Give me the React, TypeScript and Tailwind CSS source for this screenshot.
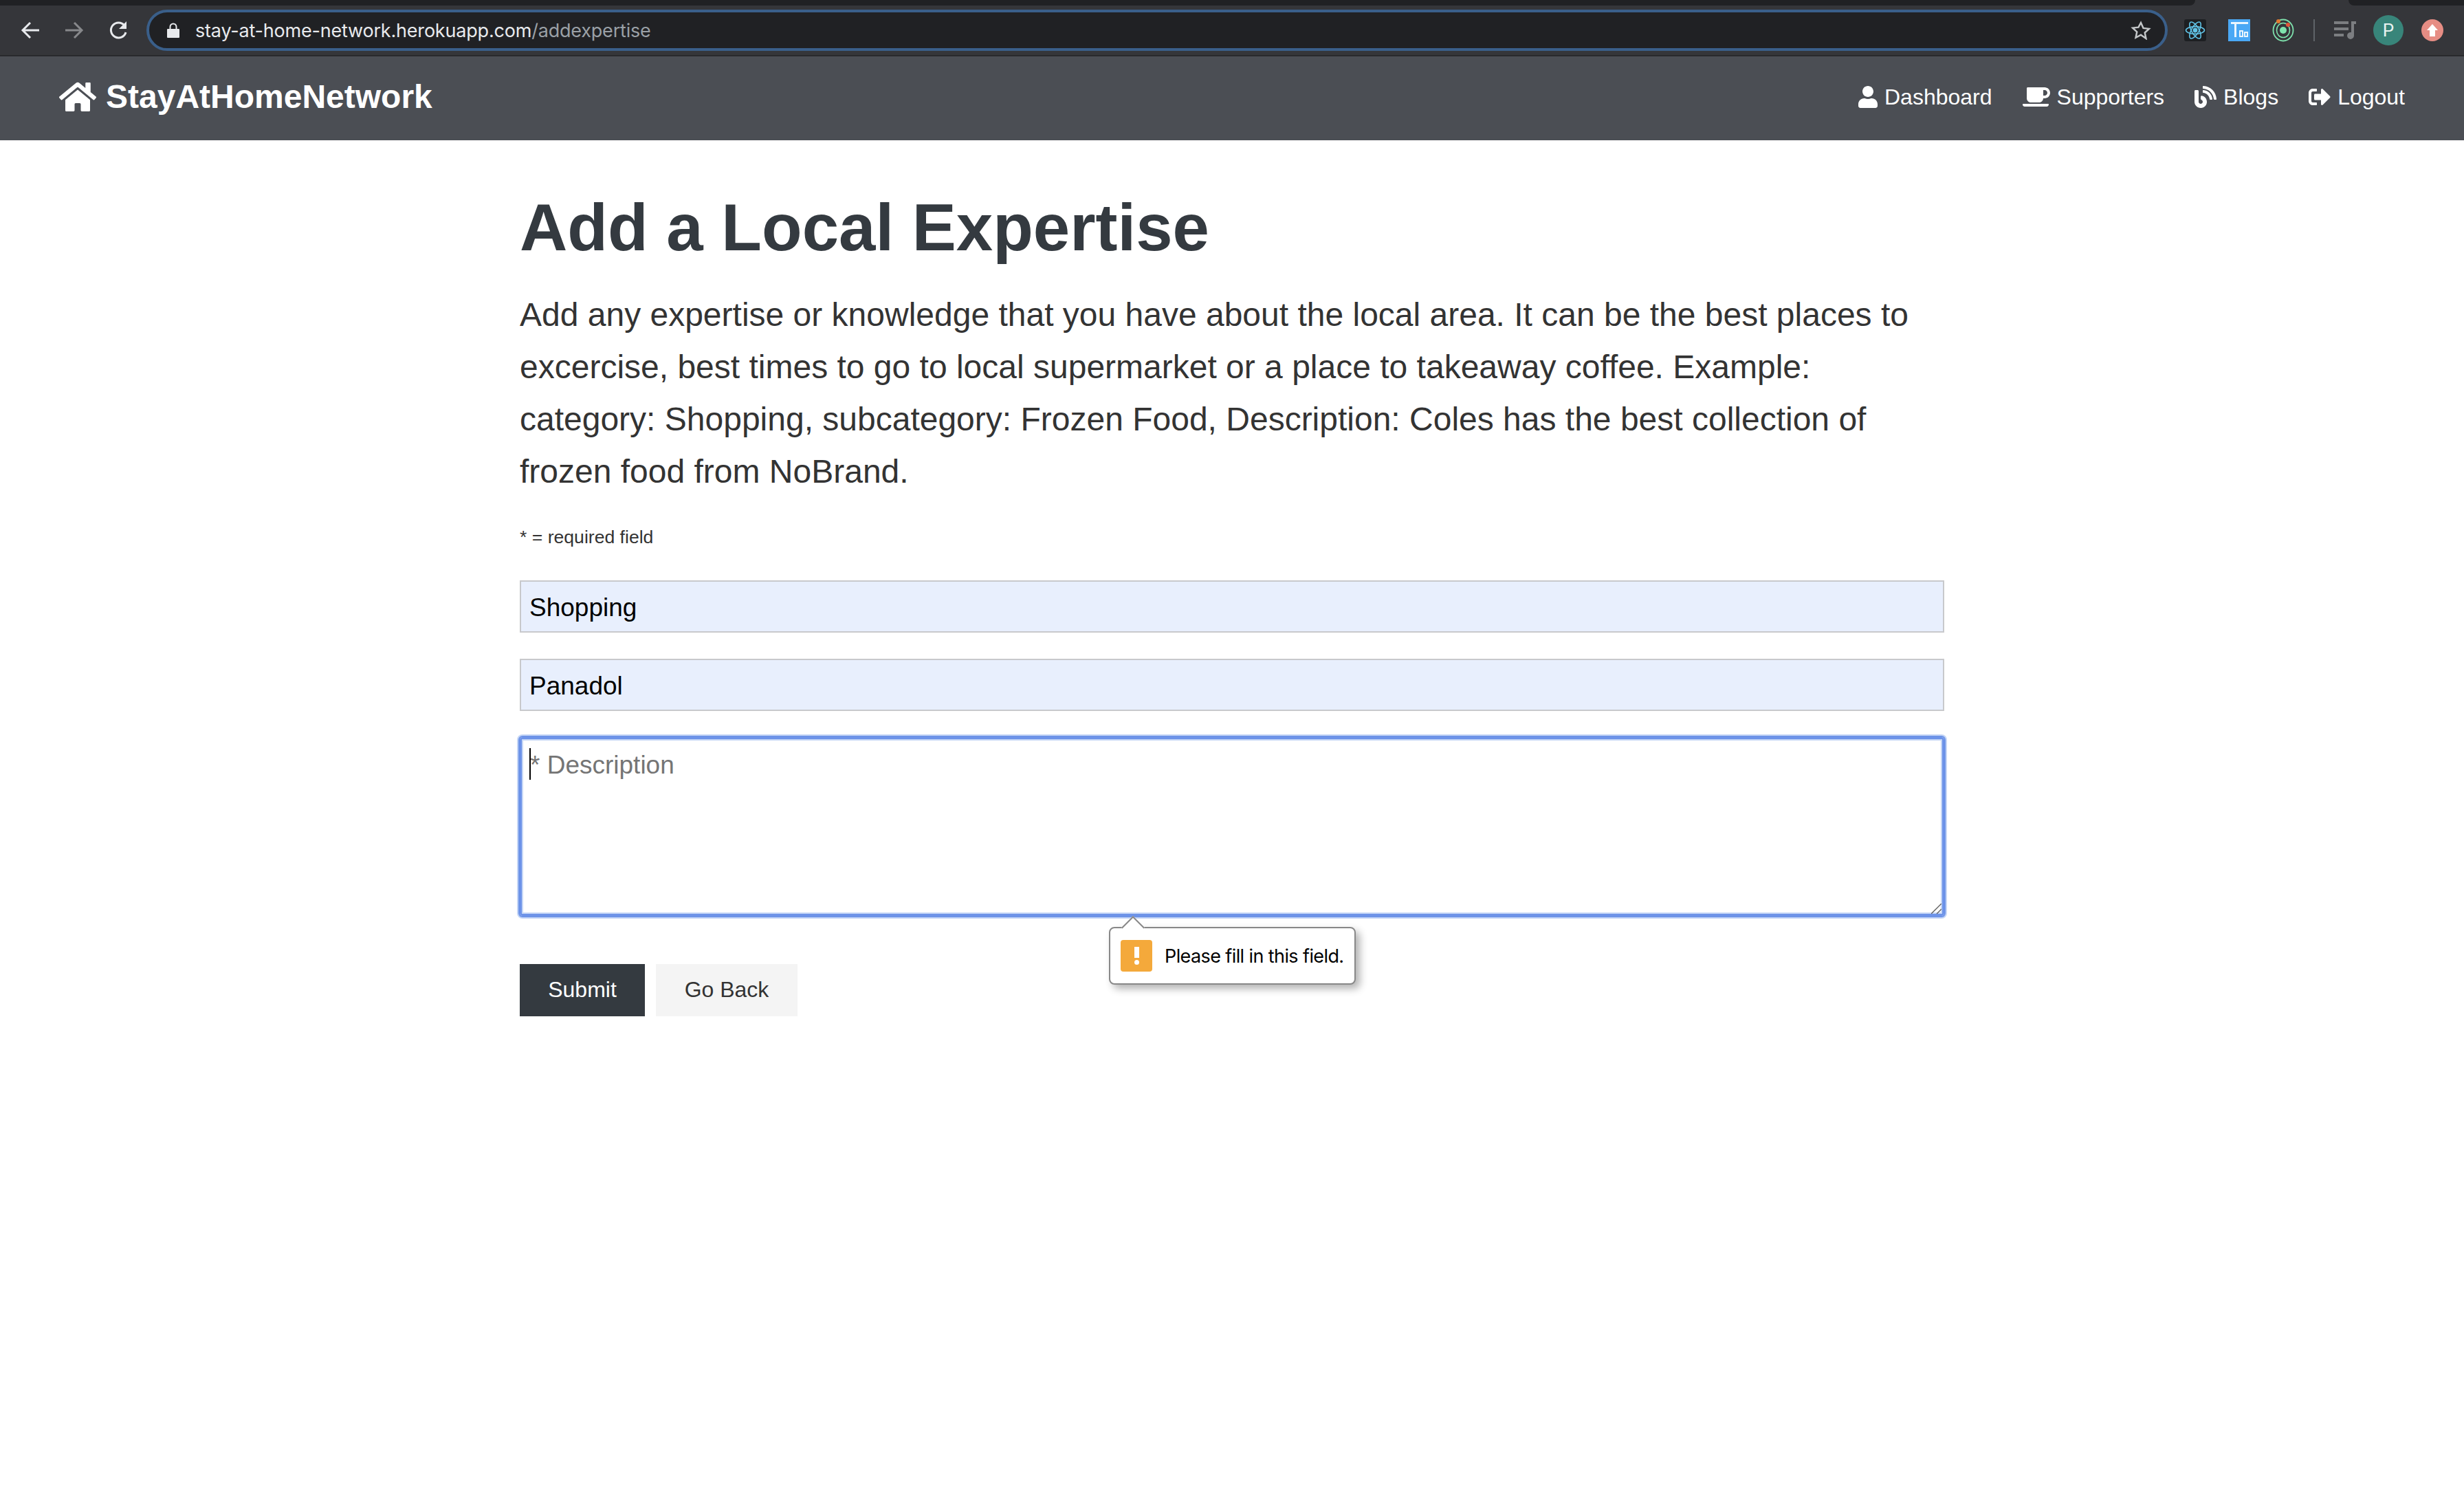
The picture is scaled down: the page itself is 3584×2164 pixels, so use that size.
import { FaBlog, FaCoffee, FaHome, FaSignOutAlt, FaUser } from "react-icons/fa";

const navLinks = [
  { label: "Dashboard", Icon: FaUser, size: "w-[28px] h-[32px]" },
  { label: "Supporters", Icon: FaCoffee, size: "w-[40px] h-[32px]" },
  { label: "Blogs", Icon: FaBlog, size: "w-[32px] h-[32px]" },
  { label: "Logout", Icon: FaSignOutAlt, size: "w-[32px] h-[32px]" },
];

function BrowserChrome() {
  return (
    <div className="bg-[#35363a]">
      {/* tab strip */}
      <div className="flex h-[8px]">
        <div className="w-[3193px] bg-[#202124] rounded-br-[12px]" />
        <div className="flex-1" />
        <div className="w-[168px] bg-[#202124] rounded-bl-[12px]" />
      </div>
      <div className="flex items-center h-[72px] pl-[30px]">
        <svg width="28" height="26" viewBox="0 0 28 26" fill="none" stroke="#e8eaed" strokeWidth="3">
          <path d="M27 13H3M14 2 3 13l11 11" />
        </svg>
        <svg className="ml-[36px]" width="28" height="26" viewBox="0 0 28 26" fill="none" stroke="#87888b" strokeWidth="3">
          <path d="M1 13h24M14 2l11 11-11 11" />
        </svg>
        <svg className="ml-[35px]" width="30" height="28" viewBox="0 0 30 28" fill="none" stroke="#e8eaed" strokeWidth="3">
          <path d="M24 7a11 11 0 1 0 2 10" />
          <path d="M27 1v11H16z" fill="#e8eaed" stroke="none" />
        </svg>
        {/* address bar */}
        <div className="ml-[26px] w-[2940px] h-[60px] rounded-full border-[4px] border-[#3a5f8a] bg-[#202124] flex items-center pl-[26px] pr-[20px]">
          <svg width="18" height="22" viewBox="0 0 18 22" fill="#e8eaed">
            <path d="M1 9h16a1 1 0 0 1 1 1v11a1 1 0 0 1-1 1H1a1 1 0 0 1-1-1V10a1 1 0 0 1 1-1z" />
            <path d="M4.5 9V6a4.5 4.5 0 0 1 9 0v3" fill="none" stroke="#e8eaed" strokeWidth="2" />
          </svg>
          <span className="ml-[23px] font-['Inter'] text-[27px] tracking-[-0.2px] text-[#e8eaed] leading-none">
            stay-at-home-network.herokuapp.com<span className="text-[#9aa0a6]">/addexpertise</span>
          </span>
          <svg className="ml-auto" width="30" height="28" viewBox="0 0 24 23" fill="none" stroke="#c4c7c9" strokeWidth="2">
            <path d="M12 2.5l2.9 6.4 6.9.8-5.1 4.7 1.4 6.9L12 17l-6.1 3.3 1.4-6.9-5.1-4.7 6.9-.8z" />
          </svg>
        </div>
        {/* extensions */}
        <div className="ml-[24px] w-[32px] h-[32px] bg-[#1d1f22] rounded-[3px] flex items-center justify-center">
          <svg width="30" height="30" viewBox="-15 -15 30 30" fill="none" stroke="#61c3e6" strokeWidth="1.6">
            <circle r="2.6" fill="#61c3e6" />
            <ellipse rx="13.5" ry="5.4" />
            <ellipse rx="13.5" ry="5.4" transform="rotate(60)" />
            <ellipse rx="13.5" ry="5.4" transform="rotate(120)" />
          </svg>
        </div>
        <div className="ml-[32px] w-[32px] h-[32px] bg-[#4aa8f5] flex flex-col items-center justify-center">
          <svg width="28" height="28" viewBox="0 0 28 28" fill="#e9f5fe">
            <path d="M2 2h25v3H2zM7 5h3v19H7zM14 14h6v10h-6zm2 2v6h2v-6zM21 16h6v8h-6zm2 2v4h2v-4z" fillRule="evenodd" />
          </svg>
        </div>
        <svg className="ml-[32px]" width="32" height="34" viewBox="-16 -17 32 34" fill="none">
          <ellipse rx="14.5" ry="15.5" stroke="#7fe3ae" strokeWidth="1.8" />
          <ellipse rx="9.5" ry="10.5" stroke="#7fe3ae" strokeWidth="1.6" />
          <circle r="5" fill="#7fe3ae" />
          <circle cx="-7" cy="-13" r="3" fill="#e0792f" />
          <circle cx="7" cy="-8" r="3" fill="#e0553a" />
        </svg>
        <div className="ml-[28px] w-[2px] h-[32px] bg-[#5f6368]" />
        <svg className="ml-[28px]" width="32" height="28" viewBox="0 0 32 28" fill="#7c7e81">
          <path d="M0 1h21v4H0zM0 10h21v4H0zM0 19h14v4H0z" />
          <path d="M25 1h7v4h-3v17a5 5 0 1 1-4-5z" />
        </svg>
        <div className="ml-[25px] w-[44px] h-[44px] rounded-full bg-[#38857a] flex items-center justify-center font-['Roboto'] text-[#e8f3f1] text-[26px] leading-none">
          P
        </div>
        <div className="ml-[26px] w-[32px] h-[32px] rounded-full bg-[#e68d84] flex items-center justify-center">
          <svg width="16" height="18" viewBox="0 0 16 18" fill="#fff">
            <path d="M8 0l8 9h-4v9H4V9H0z" />
          </svg>
        </div>
      </div>
      <div className="h-[2px] bg-[#28292c]" />
    </div>
  );
}

function Navbar() {
  return (
    <nav className="h-[122px] bg-[#4b4e54] flex items-center justify-between pl-[86px] pr-[86px] pb-[4px] text-white font-['Liberation_Sans']">
      <div className="flex items-center gap-[14px]">
        <FaHome className="w-[54px] h-[48px]" />
        <span className="text-[48px] font-bold leading-none">StayAtHomeNetwork</span>
      </div>
      <div className="flex items-center gap-[44px]">
        {navLinks.map(({ label, Icon, size }) => (
          <div key={label} className="flex items-center gap-[10px] text-[32px] leading-none">
            <Icon className={size} />
            <span>{label}</span>
          </div>
        ))}
      </div>
    </nav>
  );
}

function ValidationBubble() {
  return (
    <div className="absolute left-[857px] top-[504px] w-[359px] h-[84px] bg-white border-2 border-[#888888] rounded-[8px] shadow-[6px_6px_12px_rgba(0,0,0,0.3)] flex items-center pl-[15px]">
      <div className="absolute left-[21px] -top-[13px] w-[24px] h-[24px] bg-white border-l-2 border-t-2 border-[#888888] rotate-45" />
      <div className="relative w-[46px] h-[46px] bg-[#f4a93b] rounded-[4px] flex flex-col items-center justify-center">
        <div className="w-[7px] h-[16px] bg-white" />
        <div className="w-[7px] h-[7px] rounded-full bg-white mt-[3px]" />
      </div>
      <span className="ml-[18px] font-['Inter'] text-[27px] tracking-[-0.6px] text-black leading-none">
        Please fill in this field.
      </span>
    </div>
  );
}

export default function App() {
  return (
    <div className="min-h-screen bg-white font-['Liberation_Sans'] overflow-hidden">
      <BrowserChrome />
      <Navbar />
      <main className="w-[2072px] mx-auto pt-[69px]">
        <h1 className="text-[96px] font-bold leading-[115px] text-[#343a40]">Add a Local Expertise</h1>
        <p className="mt-[32px] text-[48px] leading-[76px] text-[#333333]">
          Add any expertise or knowledge that you have about the local area. It can be the best places to excercise,
          best times to go to local supermarket or a place to takeaway coffee. Example: category: Shopping,
          subcategory: Frozen Food, Description: Coles has the best collection of frozen food from NoBrand.
        </p>
        <p className="mt-[36px] text-[26.6px] leading-[42px] text-[#333333]">* = required field</p>
        <form className="relative mt-[42px]">
          <input
            readOnly
            value="Shopping"
            className="block w-full h-[76px] border-2 border-[#c8c9cc] bg-[#e8effd] px-[12px] pt-[3px] text-[37px] text-black outline-none"
          />
          <input
            readOnly
            value="Panadol"
            className="block w-full h-[76px] mt-[38px] border-2 border-[#c8c9cc] bg-[#e8effd] px-[12px] pt-[3px] text-[37px] text-black outline-none"
          />
          <div className="relative mt-[38px] h-[260px]">
            <textarea
              readOnly
              placeholder="* Description"
              className="block w-full h-full resize-none border-[3px] border-[#6d93e8] rounded-[4px] shadow-[0_0_0_2px_#6d93e8,0_0_0_4px_#c5d6f6,inset_0_0_0_2px_#c5d6f6] px-[12px] py-[14px] text-[37px] leading-[48px] text-black placeholder:text-[#757575] outline-none"
            />
            <div className="absolute left-[14px] top-[16px] w-[2px] h-[46px] bg-black" />
            {/* resize grip */}
            <svg className="absolute right-[4px] bottom-[3px]" width="15" height="15" viewBox="0 0 15 15" fill="none" stroke="#5f5f5f" strokeWidth="1.4">
              <path d="M0 15 15 0M8 15l7-7" />
            </svg>
          </div>
          <div className="flex gap-[16px] mt-[70px]">
            <button type="button" className="w-[182px] h-[76px] pb-[3px] bg-[#343a40] text-white text-[32px]">
              Submit
            </button>
            <button type="button" className="w-[206px] h-[76px] pb-[3px] bg-[#f4f4f4] text-[#333333] text-[32px]">
              Go Back
            </button>
          </div>
          <ValidationBubble />
        </form>
      </main>
    </div>
  );
}
